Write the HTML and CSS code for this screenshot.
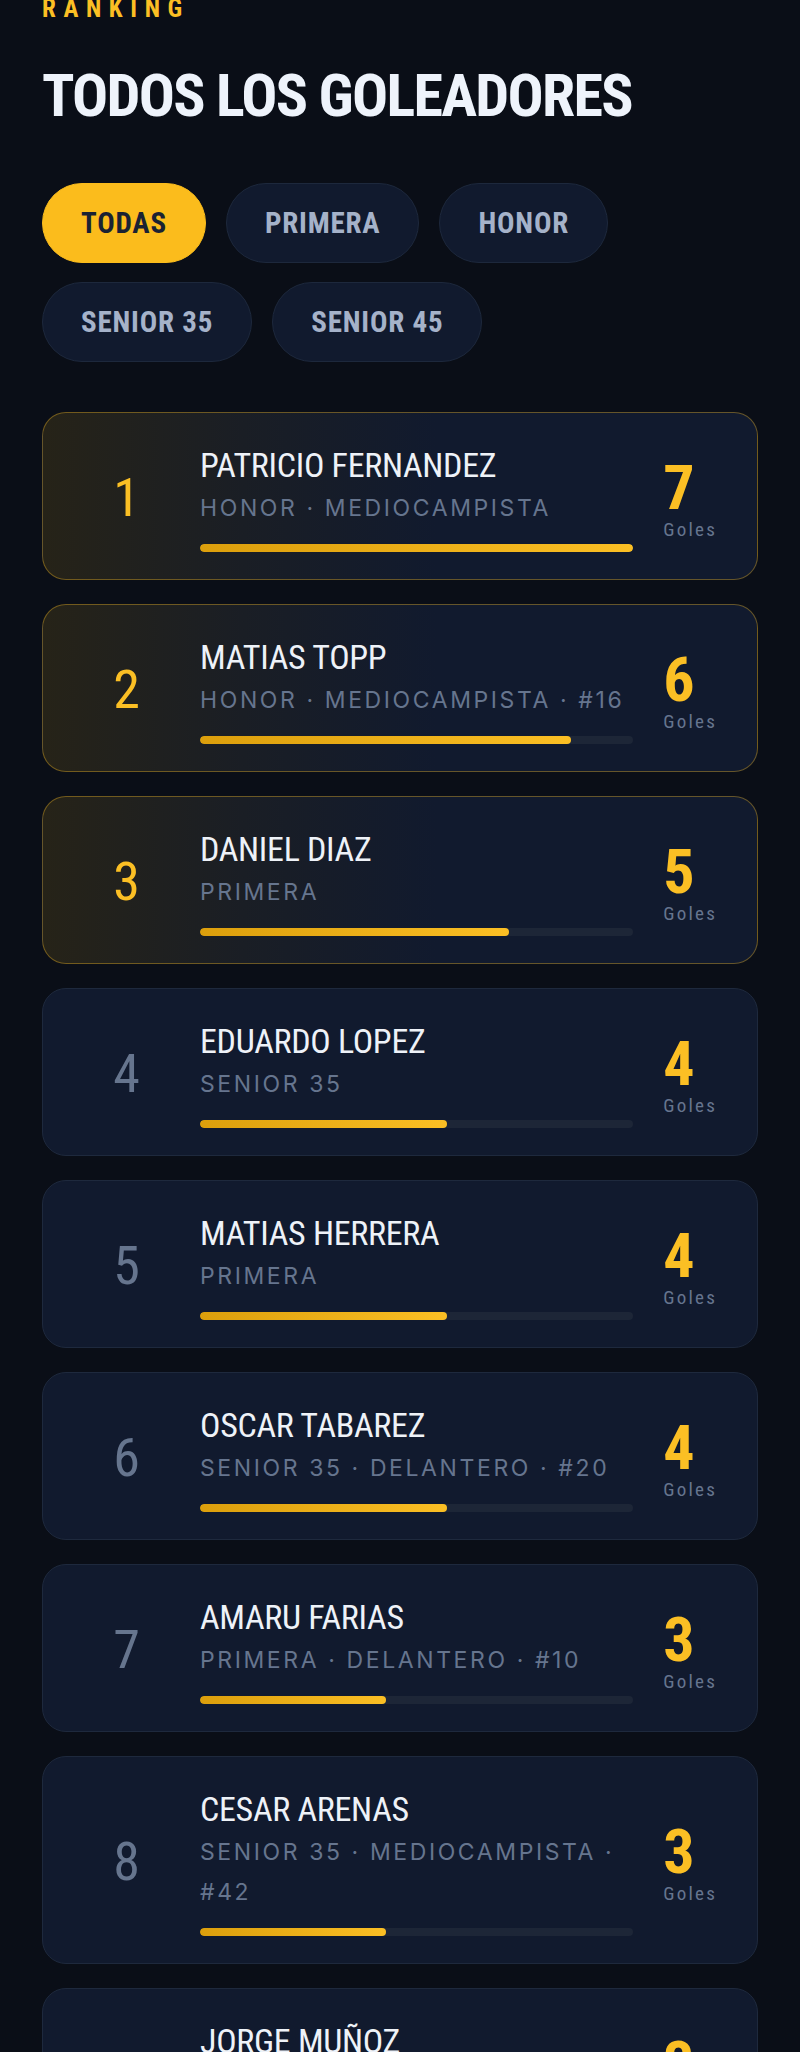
FILE: index.html
```html
<!DOCTYPE html>
<html lang="es">
<head>
<meta charset="utf-8">
<title>Ranking de goleadores</title>
<link rel="stylesheet" href="styles.css">
</head>
<body>
<main class="page">
  <p class="eyebrow">RANKING</p>
  <h1 class="title">TODOS LOS GOLEADORES</h1>

  <div class="chips">
    <button class="chip chip-active">TODAS</button>
    <button class="chip">PRIMERA</button>
    <button class="chip">HONOR</button>
    <button class="chip">SENIOR 35</button>
    <button class="chip">SENIOR 45</button>
  </div>

  <ol class="list">
    <li class="card card-top">
      <span class="rank">1</span>
      <div class="info">
        <div class="name">PATRICIO FERNANDEZ</div>
        <div class="meta">HONOR · MEDIOCAMPISTA</div>
        <div class="bar"><span class="fill" style="width:100%"></span></div>
      </div>
      <div class="goals"><span class="num">7</span><span class="lbl">Goles</span></div>
    </li>
    <li class="card card-top">
      <span class="rank">2</span>
      <div class="info">
        <div class="name">MATIAS TOPP</div>
        <div class="meta">HONOR · MEDIOCAMPISTA · #16</div>
        <div class="bar"><span class="fill" style="width:85.7%"></span></div>
      </div>
      <div class="goals"><span class="num">6</span><span class="lbl">Goles</span></div>
    </li>
    <li class="card card-top">
      <span class="rank">3</span>
      <div class="info">
        <div class="name">DANIEL DIAZ</div>
        <div class="meta">PRIMERA</div>
        <div class="bar"><span class="fill" style="width:71.4%"></span></div>
      </div>
      <div class="goals"><span class="num">5</span><span class="lbl">Goles</span></div>
    </li>
    <li class="card">
      <span class="rank">4</span>
      <div class="info">
        <div class="name">EDUARDO LOPEZ</div>
        <div class="meta">SENIOR 35</div>
        <div class="bar"><span class="fill" style="width:57.1%"></span></div>
      </div>
      <div class="goals"><span class="num">4</span><span class="lbl">Goles</span></div>
    </li>
    <li class="card">
      <span class="rank">5</span>
      <div class="info">
        <div class="name">MATIAS HERRERA</div>
        <div class="meta">PRIMERA</div>
        <div class="bar"><span class="fill" style="width:57.1%"></span></div>
      </div>
      <div class="goals"><span class="num">4</span><span class="lbl">Goles</span></div>
    </li>
    <li class="card">
      <span class="rank">6</span>
      <div class="info">
        <div class="name">OSCAR TABAREZ</div>
        <div class="meta">SENIOR 35 · DELANTERO · #20</div>
        <div class="bar"><span class="fill" style="width:57.1%"></span></div>
      </div>
      <div class="goals"><span class="num">4</span><span class="lbl">Goles</span></div>
    </li>
    <li class="card">
      <span class="rank">7</span>
      <div class="info">
        <div class="name">AMARU FARIAS</div>
        <div class="meta">PRIMERA · DELANTERO · #10</div>
        <div class="bar"><span class="fill" style="width:42.9%"></span></div>
      </div>
      <div class="goals"><span class="num">3</span><span class="lbl">Goles</span></div>
    </li>
    <li class="card">
      <span class="rank">8</span>
      <div class="info">
        <div class="name">CESAR ARENAS</div>
        <div class="meta">SENIOR 35 · MEDIOCAMPISTA · #42</div>
        <div class="bar"><span class="fill" style="width:42.9%"></span></div>
      </div>
      <div class="goals"><span class="num">3</span><span class="lbl">Goles</span></div>
    </li>
    <li class="card">
      <span class="rank">9</span>
      <div class="info">
        <div class="name">JORGE MUÑOZ</div>
        <div class="meta">PRIMERA</div>
        <div class="bar"><span class="fill" style="width:42.9%"></span></div>
      </div>
      <div class="goals"><span class="num">3</span><span class="lbl">Goles</span></div>
    </li>
  </ol>
</main>
</body>
</html>
```
FILE: styles.css
```css
* { box-sizing: border-box; }

html, body {
  margin: 0;
  padding: 0;
  background: #0a0e17;
}

body {
  font-family: "Roboto Condensed", "Roboto", sans-serif;
  color: #eef2f8;
}

.page {
  padding: 0 42px 40px;
}

.eyebrow {
  margin: -3px 0 0;
  font-family: "Roboto Condensed", sans-serif;
  font-weight: 700;
  font-size: 25px;
  line-height: 24px;
  letter-spacing: 7.6px;
  color: #fbbf24;
}

.title {
  margin: 42px 0 0;
  font-family: "Roboto Condensed", sans-serif;
  font-weight: 700;
  font-size: 60px;
  line-height: 66px;
  letter-spacing: -1.7px;
  color: #eef3fb;
}

.chips {
  margin-top: 54px;
  display: flex;
  flex-wrap: wrap;
  gap: 19px 20px;
}

.chip {
  height: 80px;
  padding: 0 38px;
  border-radius: 40px;
  border: 1.5px solid #1d283c;
  background: #111a2e;
  color: #a5b2c9;
  font-family: "Roboto Condensed", sans-serif;
  font-weight: 700;
  font-size: 29px;
  letter-spacing: 0.8px;
  line-height: 1;
  cursor: pointer;
}

.chip-active {
  background: #fbbc1c;
  border-color: #fbbc1c;
  color: #1a2233;
}

.list {
  list-style: none;
  margin: 50px 0 0;
  padding: 0;
  display: flex;
  flex-direction: column;
  gap: 24px;
}

.card {
  display: grid;
  grid-template-columns: 87px 1fr auto;
  column-gap: 30px;
  align-items: center;
  padding: 30px 40px 27px 40px;
  border: 1px solid #1e293d;
  border-radius: 24px;
  background: #111a2e;
}

.card-top {
  border-color: rgba(251, 191, 36, 0.36);
  background: linear-gradient(90deg, #262318 0%, #1a1e25 28%, #111a2e 55%, #111a2e 100%);
}

.rank {
  text-align: center;
  font-family: "Roboto Condensed", sans-serif;
  font-weight: 400;
  font-size: 54px;
  line-height: 54px;
  color: #66758e;
}

.card-top .rank {
  color: #fbbf24;
}

.info {
  min-width: 0;
}

.name {
  font-family: "Roboto Condensed", sans-serif;
  font-weight: 400;
  font-size: 34px;
  line-height: 45px;
  letter-spacing: -0.3px;
  color: #eef2f8;
}

.meta {
  font-family: "Inter", "Noto Sans", sans-serif;
  font-weight: 400;
  font-size: 23px;
  line-height: 40px;
  letter-spacing: 2.6px;
  color: #66758e;
}

.bar {
  margin-top: 16px;
  height: 8px;
  border-radius: 4px;
  background: #1d2637;
  overflow: hidden;
}

.fill {
  display: block;
  height: 100%;
  border-radius: 4px;
  background: linear-gradient(90deg, #dc9f0c 0%, #fbbf24 100%);
}

.goals {
  display: flex;
  flex-direction: column;
  align-items: flex-start;
  padding-top: 6px;
}

.num {
  font-family: "Roboto Condensed", sans-serif;
  font-weight: 700;
  font-size: 62px;
  line-height: 52px;
  color: #fbbf24;
}

.lbl {
  margin-top: 6px;
  font-family: "Roboto Condensed", sans-serif;
  font-weight: 400;
  font-size: 19px;
  line-height: 20px;
  letter-spacing: 2.2px;
  color: #66758e;
}
```
